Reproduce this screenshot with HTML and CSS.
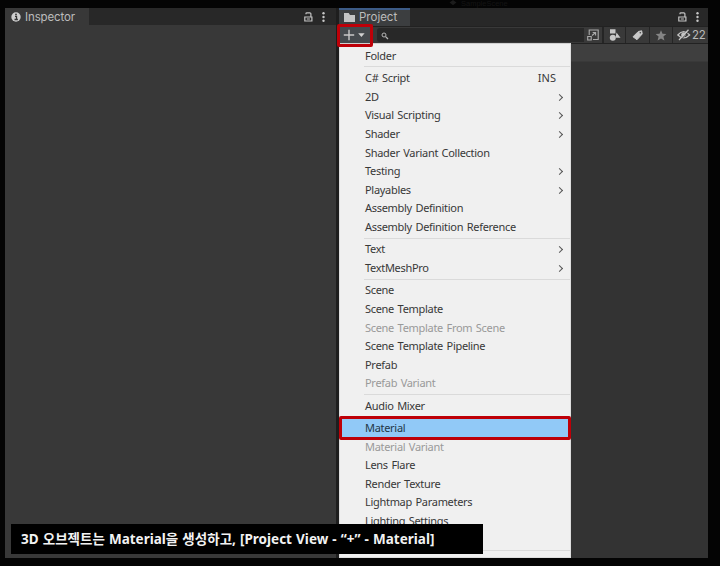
FILE: index.html
```html
<!DOCTYPE html>
<html lang="ko">
<head>
<meta charset="utf-8">
<title>Project</title>
<link rel="stylesheet" href="styles.css">
</head>
<body>
<div class="ghost"><svg width="8" height="6" viewBox="0 0 9 7"><path d="M4.500 0 8.500 3 4.500 6 .5 3z" fill="#1c1c1c"/></svg><span>SampleScene</span></div>
<main class="editor">
  <section class="panel inspector">
    <header class="tabbar">
      <div class="tab tab-inspector">
        <svg class="info" width="10" height="10" viewBox="0 0 10 10"><circle cx="5" cy="5" r="4.700" fill="#cdcdcd"/><path d="M4 4.300h1.500v3M3.500 7.500h3.400" stroke="#333" stroke-width="1.300" fill="none"/><circle cx="5" cy="2.400" r=".9" fill="#333"/></svg>
        <span>Inspector</span>
      </div>
      <div class="tools">
        <svg width="9" height="10" viewBox="0 0 9 10" fill="none" stroke="#c4c4c4"><path d="M2 2.300V1.500Q2 .8 2.800.8H5.800Q6.900.8 6.900 1.700V5M.8 5H7.900V9H.8zM2.800 7H5.900" stroke-width="1.200"/></svg>
        <svg width="3" height="10" viewBox="0 0 3 10" fill="#c8c8c8"><circle cx="1.500" cy="1.300" r="1.200"/><circle cx="1.500" cy="5" r="1.200"/><circle cx="1.500" cy="8.700" r="1.200"/></svg>
      </div>
    </header>
  </section>
  <section class="panel project">
    <header class="tabbar">
      <div class="tab tab-project">
        <svg width="11" height="9" viewBox="0 0 11 9"><path d="M0 0h4.700l1.300 2H11V9H0z" fill="#c4c4c4"/></svg>
        <span>Project</span>
      </div>
      <div class="tools">
        <svg width="9" height="10" viewBox="0 0 9 10" fill="none" stroke="#c4c4c4"><path d="M2 2.300V1.500Q2 .8 2.800.8H5.800Q6.900.8 6.900 1.700V5M.8 5H7.900V9H.8zM2.800 7H5.900" stroke-width="1.200"/></svg>
        <svg width="3" height="10" viewBox="0 0 3 10" fill="#c8c8c8"><circle cx="1.500" cy="1.300" r="1.200"/><circle cx="1.500" cy="5" r="1.200"/><circle cx="1.500" cy="8.700" r="1.200"/></svg>
      </div>
    </header>
    <div class="toolbar">
      <div class="create">
        <svg width="22" height="12" viewBox="0 0 22 12"><path d="M6 .8v10.400M.8 6h10.400" stroke="#c8c8c8" stroke-width="1.400"/><path d="M15.200 4.200h6.400L18.400 8z" fill="#d2d2d2"/></svg>
      </div>
      <div class="search">
        <svg width="8" height="8" viewBox="0 0 8 8" fill="none" stroke="#b5b5b5"><circle cx="3" cy="3" r="2" stroke-width="1"/><path d="M4.600 4.600 7 7" stroke-width="1.300"/></svg>
      </div>
      <div class="tool popout"><svg width="12" height="12" viewBox="0 0 12 12" fill="none" stroke="#aaa"><path d="M2.200 6V1H11.200V10.500H6M.7 7.500H4.200V11H.7zM5 6.500 8.300 3.800M5.700 3.500H8.600V6.500" stroke-width="1.100"/></svg></div>
      <div class="tool types"><svg width="12" height="12" viewBox="0 0 12 12" fill="#c8c8c8"><path d="M1 .3h5.500v4.200H1zM7.500 3.500 11.500 8.700H6.500z"/><circle cx="3.800" cy="8.700" r="3"/></svg></div>
      <div class="tool label"><svg width="12" height="11" viewBox="0 0 12 11"><path d="M1 6.800 6.300 1.500 9.700.8 10.200 4 5 9.700z" fill="#c8c8c8" stroke="#c8c8c8" stroke-linejoin="round"/><circle cx="8.300" cy="2.700" r=".8" fill="#444"/></svg></div>
      <div class="tool star"><svg width="12" height="11" viewBox="0 0 12 11"><path d="m6 .3 1.500 3.500 3.900.3-3 2.500 1 3.900L6 8.400 2.600 10.500l1-3.900-3-2.500 3.900-.3z" fill="#858585"/></svg></div>
      <div class="tool hidden-count"><svg width="14" height="12" viewBox="0 0 14 12" fill="none" stroke="#c4c4c4"><path d="M.8 6Q6.500-.8 12.700 6 6.500 11.800.8 6z" stroke-width="1.200"/><circle cx="6.500" cy="5.700" r="1.900" fill="#c4c4c4"/><path d="M2 11 11.500.8" stroke-width="1.300"/><path d="M3.300 11.500 12.700 1.500" stroke="#3a3a3a" stroke-width=".8"/></svg><span>22</span></div>
    </div>
    <div class="breadcrumb"></div>
    <div class="content"></div>
  </section>
</main>
<nav class="menu">
  <div class="item">Folder</div>
  <hr>
  <div class="item">C# Script<span class="key">INS</span></div>
  <div class="item sub">2D</div>
  <div class="item sub">Visual Scripting</div>
  <div class="item sub">Shader</div>
  <div class="item">Shader Variant Collection</div>
  <div class="item sub">Testing</div>
  <div class="item sub">Playables</div>
  <div class="item">Assembly Definition</div>
  <div class="item">Assembly Definition Reference</div>
  <hr>
  <div class="item sub">Text</div>
  <div class="item sub">TextMeshPro</div>
  <hr>
  <div class="item">Scene</div>
  <div class="item">Scene Template</div>
  <div class="item off">Scene Template From Scene</div>
  <div class="item">Scene Template Pipeline</div>
  <div class="item">Prefab</div>
  <div class="item off">Prefab Variant</div>
  <hr>
  <div class="item">Audio Mixer</div>
  <hr>
  <div class="item active">Material</div>
  <div class="item off">Material Variant</div>
  <div class="item">Lens Flare</div>
  <div class="item">Render Texture</div>
  <div class="item">Lightmap Parameters</div>
  <div class="item">Lighting Settings</div>
  <div class="item"></div>
  <hr>
</nav>
<div class="mark mark-create"></div>
<div class="mark mark-material"></div>
<div class="caption"><span>3D 오브젝트는 Material을 생성하고, [Project View - “+” - Material]</span></div>
</body>
</html>
```
FILE: styles.css
```css
* { box-sizing: border-box; }
body {
  margin: 0;
  width: 720px;
  height: 566px;
  overflow: hidden;
  background: #040404;
  padding: 8px 12px 8px 5px;
  position: relative;
  font-family: "Noto Sans", "Noto Sans CJK KR", sans-serif;
}
svg { display: block; flex: none; }
.ghost {
  position: absolute;
  left: 449px;
  top: 0;
  display: flex;
  gap: 4px;
  font: 7.500px/7px "Liberation Sans", sans-serif;
  color: #141414;
}
.editor {
  display: grid;
  grid-template-columns: 331px 1fr;
  column-gap: 3px;
  width: 703px;
  height: 550px;
  background: #1e1e1e;
}
.panel { display: flex; flex-direction: column; background: #383838; min-width: 0; }
.tabbar {
  display: flex;
  justify-content: space-between;
  height: 18px;
  background: #282828;
  font: 11.500px/17px Inter, sans-serif;
  color: #bcbcbc;
  flex: none;
}
.tab { display: flex; align-items: center; }
.tab-inspector { width: 84px; background: #383838; padding-left: 6px; gap: 4px; }
.tab-inspector span { padding-top: 1px; letter-spacing: -.12px; }
.tab-project { width: 71px; background: #3c3e40; border-top: 2px solid #3c5b87; padding-left: 5px; gap: 4px; }
.tab-project span { line-height: 15px; margin-top: -1px; }
.tab-project svg { margin-top: -1px; }
.tools { display: flex; align-items: center; gap: 9px; padding-right: 11px; }
.project .tools { padding-right: 9px; }
.inspector .tabbar { height: 17px; }
.toolbar {
  display: flex;
  height: 18px;
  background: #393939;
  border-top: 1px solid #222;
  border-bottom: 1px solid #222;
  flex: none;
}
.create { width: 34px; padding: 2px 0 0 4px; background: #454a4e; }
.search {
  width: 207px;
  margin: 1px 0 1px 4px;
  background: #282828;
  border-radius: 3px 0 0 3px;
  padding: 4px 0 0 4px;
}
.tool { display: flex; align-items: center; justify-content: center; border-right: 1px solid #252525; }
.popout { width: 20px; border-right: 2px solid #252525; }
.types { width: 22px; }
.label { width: 24px; }
.star { width: 23px; }
.hidden-count {
  flex: 1;
  border: 0;
  gap: 1px;
  justify-content: flex-start;
  padding-left: 4px;
  font: 11.500px/16px Inter, sans-serif;
  letter-spacing: -.3px;
  color: #bababa;
}
.breadcrumb { height: 18px; background: #3f3f3f; border-bottom: 1px solid #393939; flex: none; }
.content { flex: 1; background: #333; }
.menu {
  position: absolute;
  left: 339px;
  top: 43px;
  width: 232px;
  height: 515px;
  overflow: hidden;
  padding-top: 2.800px;
  background: #f0f0f0;
  border: 1px solid #dedede;
  border-top-color: #d0d0d0;
  color: #383838;
  font-size: 11px;
  letter-spacing: -.3px;
  word-spacing: 1px;
}
.menu hr {
  height: 1px;
  margin: 1px 0 1.800px 24px;
  border: 0;
  background: #dadada;
}
.item {
  display: flex;
  justify-content: space-between;
  height: 18.600px;
  line-height: 18.600px;
  padding: 0 14px 0 25px;
  white-space: nowrap;
}
.key { letter-spacing: 0; }
.off { color: #999; }
.active { background: #91c9f7; color: #243746; }
.sub { padding-right: 8px; align-items: center; }
.sub::after {
  content: "";
  width: 4px;
  height: 4px;
  border: solid #555;
  border-width: 1px 1px 0 0;
  transform: rotate(45deg);
}
.mark { position: absolute; border: 3px solid #be0008; border-radius: 2px; }
.mark-create { left: 337px; top: 24px; width: 36px; height: 23px; }
.mark-material { left: 339px; top: 416px; width: 232px; height: 24px; }
.caption {
  position: absolute;
  left: 11px;
  top: 524px;
  width: 472px;
  height: 30px;
  padding-left: 10px;
  background: #000;
  color: #f2f2f2;
  font: bold 13.500px/30px "Noto Sans", "Noto Sans CJK KR", sans-serif;
  word-spacing: .6px;
  white-space: nowrap;
}
```
